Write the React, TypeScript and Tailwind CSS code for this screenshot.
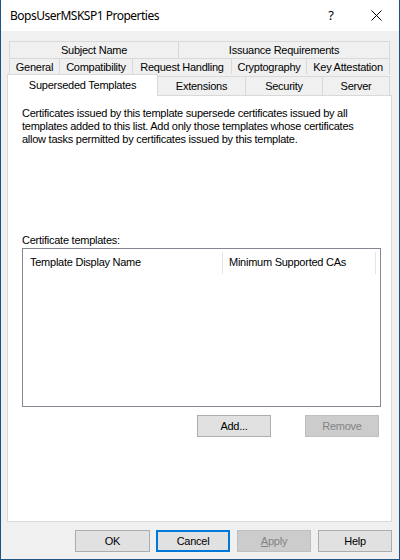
const ui = "font-['Liberation_Sans',Arial,sans-serif] text-[11px] leading-[13px] tracking-[-0.25px] text-black"

function Tab({ label, className }: { label: string; className: string }) {
  return (
    <div className={`flex items-center justify-center border-[#d9d9d9] bg-[#f0f0f0] ${className}`}>
      <span className="whitespace-nowrap">{label}</span>
    </div>
  )
}

function Button({
  label,
  width,
  disabled,
  focused,
  className = '',
}: {
  label: React.ReactNode
  width: string
  disabled?: boolean
  focused?: boolean
  className?: string
}) {
  const look = disabled
    ? 'border border-[#bfbfbf] bg-[#cccccc] text-[#838383]'
    : focused
      ? 'border-2 border-[#0078d7] bg-[#e1e1e1]'
      : 'border border-[#adadad] bg-[#e1e1e1]'
  return (
    <div className={`flex h-[22px] items-center justify-center ${width} ${look} ${className}`}>
      {label}
    </div>
  )
}

export default function App() {
  return (
    <div className={`flex h-[560px] w-[400px] flex-col border-x border-b border-[#1c5383] ${ui}`}>
      {/* title bar */}
      <div className="flex h-[31px] shrink-0 items-center bg-white">
        <span className="pl-[9px] font-['Noto_Sans',sans-serif] text-[12px] tracking-[-0.5px]">
          BopsUserMSKSP1 Properties
        </span>
        <div className="ml-auto flex h-full">
          <div className="flex w-[46px] items-center justify-center font-['Noto_Sans',sans-serif] text-[13px] tracking-normal">
            ?
          </div>
          <div className="flex w-[45px] items-center justify-center">
            <svg width="11" height="11" viewBox="0 0 11 11" fill="none" stroke="#000" strokeWidth="1">
              <path d="M0.5 0.5 L10.5 10.5 M10.5 0.5 L0.5 10.5" />
            </svg>
          </div>
        </div>
      </div>

      {/* body */}
      <div className="flex flex-1 flex-col bg-[#f0f0f0] pl-[6px] pr-[7px] pt-[10px]">
        {/* tab rows */}
        <div className="ml-[2px] flex h-[17px]">
          <Tab label="Subject Name" className="w-[169px] border-l border-t" />
          <Tab label="Issuance Requirements" className="w-[212px] border-x border-t" />
        </div>
        <div className="ml-[2px] flex h-[16px]">
          <Tab label="General" className="w-[50px] border-l border-t pt-[1px]" />
          <Tab label="Compatibility" className="w-[73px] border-l border-t pt-[1px]" />
          <Tab label="Request Handling" className="w-[99px] border-l border-t pt-[1px]" />
          <Tab label="Cryptography" className="w-[75px] border-l border-t pt-[1px]" />
          <Tab label="Key Attestation" className="w-[84px] border-x border-t pt-[1px]" />
        </div>
        <div className="flex h-[21px] items-start">
          <div className="relative z-10 -mb-px flex h-[22px] w-[151px] items-center justify-center border-x border-t border-[#d9d9d9] bg-white pb-[1px]">
            Superseded Templates
          </div>
          <div className="mt-[2px] flex h-[19px] items-end">
            <Tab label="Extensions" className="h-[19px] w-[87px] border-t" />
            <Tab label="Security" className="h-[19px] w-[77px] border-l border-t" />
            <Tab label="Server" className="h-[19px] w-[68px] border-x border-t" />
          </div>
        </div>

        {/* panel */}
        <div className="flex h-[427px] flex-col border border-[#d9d9d9] bg-white pl-[14px] pr-[9px] pt-[11px]">
          <div className="whitespace-nowrap">
            <div>Certificates issued by this template supersede certificates issued by all</div>
            <div>templates added to this list. Add only those templates whose certificates</div>
            <div>allow tasks permitted by certificates issued by this template.</div>
          </div>

          <div className="mt-[88px]">Certificate templates:</div>

          <div className="mt-[1px] h-[159px] w-[359px] border border-[#828790] bg-white">
            <div className="flex h-[25px] items-center pt-[2px]">
              <div className="flex h-[22px] w-[200px] items-center border-r border-[#e5e5e5] pl-[7px]">
                Template Display Name
              </div>
              <div className="flex h-[22px] w-[153px] items-center border-r border-[#e5e5e5] pl-[6px]">
                Minimum Supported CAs
              </div>
            </div>
          </div>

          <div className="mt-[8px] flex w-[359px] justify-end pr-[2px]">
            <Button label="Add..." width="w-[74px]" />
            <Button label="Remove" width="w-[74px]" disabled className="ml-[34px]" />
          </div>
        </div>

        {/* dialog buttons */}
        <div className="mt-[8px] flex justify-end">
          <Button label="OK" width="w-[75px]" />
          <Button label="Cancel" width="w-[74px]" focused className="ml-[6px]" />
          <Button
            label={
              <span>
                <span className="underline">A</span>pply
              </span>
            }
            width="w-[74px]"
            disabled
            className="ml-[7px]"
          />
          <Button label="Help" width="w-[74px]" className="ml-[7px]" />
        </div>
      </div>
    </div>
  )
}
